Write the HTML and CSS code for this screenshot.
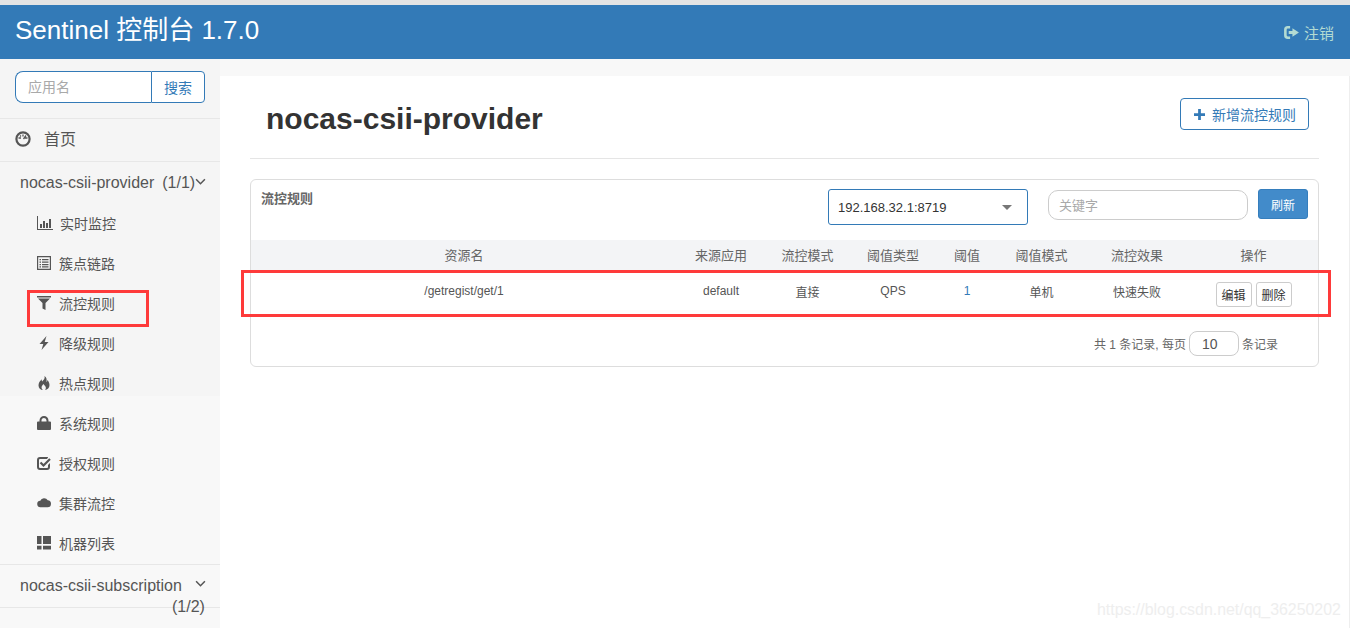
FILE: index.html
```html
<!DOCTYPE html>
<html lang="zh-CN">
<head>
<meta charset="utf-8">
<title>Sentinel 控制台</title>
<link rel="stylesheet" href="styles.css">
</head>
<body>
<div class="page">
  <header class="navbar">
    <span class="brand">Sentinel 控制台 1.7.0</span>
    <a class="logout">
      <svg class="logout-icon" viewBox="0 0 16 14"><path d="M6.500 0H4a4 4 0 0 0-4 4v6a4 4 0 0 0 4 4h2.500v-2.800H4A1.200 1.200 0 0 1 2.800 10V4A1.200 1.200 0 0 1 4 2.800h2.500V0zM9 2.500v2.800H5v3.400h4v2.800L16 7z"/></svg>注销</a>
  </header>
  <div class="body-row">
    <aside class="sidebar">
      <div class="search">
        <div class="search-group">
          <input class="search-input" placeholder="应用名">
          <button class="search-btn">搜索</button>
        </div>
      </div>
      <div class="home">
        <svg class="home-icon" viewBox="0 0 16 16"><circle cx="8" cy="8" r="6.600" fill="none" stroke="currentColor" stroke-width="2.200"/><path d="M3.500 7h2.500M10 7h2.500M8 3.500v2M5 4.500l1 1M11 4.500l-2.500 3.500" stroke="currentColor" stroke-width="1.300" fill="none"/></svg>
        <span class="home-text">首页</span>
      </div>
      <div class="app-row app-open">
        <span class="app-name">nocas-csii-provider</span><span class="app-count">(1/1)</span>
        <svg class="chev" viewBox="0 0 10 6"><path d="M1 1l4 4 4-4" fill="none" stroke="currentColor" stroke-width="1.400"/></svg>
      </div>
      <nav class="menu">
        <a class="menu-item menu-first"><svg class="mi mi-wide" viewBox="0 0 16 14"><path d="M0 0h1v13h15v1H0zM3 8h2v4H3zM6 5h2v7H6zM9 7h2v5H9zM12 3h2v9h-2z"/></svg><span>实时监控</span></a>
        <a class="menu-item"><svg class="mi" viewBox="0 0 14 14"><path fill-rule="evenodd" d="M0 0h14v14H0zM1.200 1.200v11.600h11.600V1.200zM2.500 3h1.500v1.300H2.500zM5 3h6.500v1.300H5zM2.500 5.500h1.500v1.300H2.500zM5 5.500h6.500v1.300H5zM2.500 8h1.500v1.300H2.500zM5 8h6.500v1.300H5zM2.500 10.300h1.500v1.300H2.500zM5 10.300h6.500v1.300H5z"/></svg><span>簇点链路</span></a>
        <a class="menu-item"><svg class="mi" viewBox="0 0 14 14"><path d="M0 0h14v1.500H0zM1 2.500h12L8.500 7v7l-3-1.500V7z"/></svg><span>流控规则</span></a>
        <a class="menu-item"><svg class="mi" viewBox="0 0 14 14"><path d="M9.500 0L2.500 8h3.800L4.500 14l7-8H7.700z"/></svg><span>降级规则</span></a>
        <a class="menu-item"><svg class="mi" viewBox="0 0 14 14"><path d="M7.500 0c.8 2.500-1 4-2.300 5.500C4.800 4.800 4.600 4 4.700 3.200 2.800 5 1.500 7 1.500 9.200 1.500 12 3.500 14 6 14c-1.300-1-1.800-2.300-1.200-3.700.3-.8 1-1.400 1.500-2.300.7 1 2.700 2.300 2.600 3.900-.1.900-.5 1.500-1.100 2.100 2.800-.3 4.700-2.300 4.700-5 0-2.300-1.100-3.600-1.900-5-.2 1-.6 1.600-1.300 2.100C10 4 9.800 1.500 7.500 0z"/></svg><span>热点规则</span></a>
        <a class="menu-item"><svg class="mi" viewBox="0 0 14 14"><path fill-rule="evenodd" d="M1 5.500h1.500V4.500a4.500 4.500 0 0 1 9 0v1H13a1 1 0 0 1 1 1V13a1 1 0 0 1-1 1H1a1 1 0 0 1-1-1V6.500a1 1 0 0 1 1-1zM4.500 5.500h5v-1a2.500 2.500 0 0 0-5 0z"/></svg><span>系统规则</span></a>
        <a class="menu-item"><svg class="mi" viewBox="0 0 14 14"><path d="M3 1h8v.500l-1 1.500H3a1 1 0 0 0-1 1v7a1 1 0 0 0 1 1h7a1 1 0 0 0 1-1V9l2-2v4a3 3 0 0 1-3 3H3a3 3 0 0 1-3-3V4a3 3 0 0 1 3-3z"/><path d="M3.500 6.500l3 3L13 3" fill="none" stroke="currentColor" stroke-width="2.200"/></svg><span>授权规则</span></a>
        <a class="menu-item"><svg class="mi" viewBox="0 0 15 14"><path d="M4 11.500a3.500 3.500 0 0 1-.5-7A4.500 4.500 0 0 1 11.500 4a3.800 3.800 0 0 1 3.500 3.700 3.800 3.800 0 0 1-3.800 3.800z"/></svg><span>集群流控</span></a>
        <a class="menu-item"><svg class="mi" viewBox="0 0 14 14"><path d="M0 0h4.500v8H0zM0 9.800h4.500V13.500H0zM6 0h8v8H6zM6 9.800h8v3.700H6z"/></svg><span>机器列表</span></a>
      </nav>
      <div class="app-row app-closed">
        <span class="app-name">nocas-csii-subscription</span>
        <svg class="chev chev-far" viewBox="0 0 10 6"><path d="M1 1l4 4 4-4" fill="none" stroke="currentColor" stroke-width="1.400"/></svg>
        <span class="app-count-wrap">(1/2)</span>
      </div>
    </aside>
    <main class="content">
      <div class="page-head">
        <h1 class="title">nocas-csii-provider</h1>
        <button class="add-btn"><svg class="plus" viewBox="0 0 12 12"><path d="M4.500 0h3v4.500H12v3H7.500V12h-3V7.500H0v-3h4.500z"/></svg>新增流控规则</button>
      </div>
      <section class="panel">
        <div class="panel-head">
          <span class="panel-title">流控规则</span>
          <div class="select"><span>192.168.32.1:8719</span><i class="caret"></i></div>
          <input class="keyword" placeholder="关键字">
          <button class="refresh">刷新</button>
        </div>
        <table class="rules">
          <colgroup>
            <col class="c1"><col class="c2"><col class="c3"><col class="c4"><col class="c5"><col class="c6"><col class="c7"><col class="c8">
          </colgroup>
          <thead>
            <tr><th>资源名</th><th>来源应用</th><th>流控模式</th><th>阈值类型</th><th>阈值</th><th>阈值模式</th><th>流控效果</th><th>操作</th></tr>
          </thead>
          <tbody>
            <tr><td>/getregist/get/1</td><td>default</td><td>直接</td><td>QPS</td><td class="num">1</td><td>单机</td><td>快速失败</td><td class="ops"><button class="op">编辑</button><button class="op">删除</button></td></tr>
          </tbody>
        </table>
        <div class="pager">
          <span>共 1 条记录, 每页</span><span class="page-size">10</span><span>条记录</span>
        </div>
      </section>
    </main>
  </div>
  <div class="mark mark-menu"></div>
  <div class="mark mark-row"></div>
  <div class="watermark">https://blog.csdn.net/qq_36250202</div>
</div>
</body>
</html>
```
FILE: styles.css
```css
* { box-sizing: border-box; }
html, body { margin: 0; height: 100%; }
body {
  font-family: "Liberation Sans", "Noto Sans CJK SC", sans-serif;
  font-size: 12px;
  color: #555;
  background: #f8f8f8;
  overflow: hidden;
}
.page {
  position: relative;
  width: 1350px;
  height: 628px;
  padding-top: 5px;
  display: flex;
  flex-direction: column;
  overflow: hidden;
  background: linear-gradient(#e4e4e4 0, #e4e4e4 5px, #f8f8f8 5px);
}
.navbar {
  height: 54px;
  flex: none;
  background: #337ab7;
  display: flex;
  align-items: center;
  justify-content: space-between;
  padding: 0 16px 0 15px;
}
.brand { font-size: 26px; color: #fff; position: relative; top: -5px; }
.logout {
  display: flex;
  align-items: center;
  gap: 5px;
  color: #b3dbd3;
  font-size: 15px;
}
.logout-icon { width: 15px; height: 13px; fill: #b3dbd3; }
.body-row { flex: 1; display: flex; min-height: 0; }

.sidebar {
  width: 220px;
  flex: none;
  background: linear-gradient(#f5f5f5 0, #f5f5f5 337px, #f8f8f8 337px);
}
.search { height: 60px; padding: 12px 15px 0; border-bottom: 1px solid #e7e7e7; }
.search-group { display: flex; height: 32px; }
.search-input {
  width: 136px;
  height: 32px;
  border: 1px solid #337ab7;
  border-right: 0;
  border-radius: 8px 0 0 8px;
  padding: 0 12px;
  font: 14px "Liberation Sans", "Noto Sans CJK SC", sans-serif;
  background: #fff;
  outline: 0;
}
.search-input::placeholder, .keyword::placeholder { color: #a9a9a9; opacity: 1; }
.search-btn {
  width: 54px;
  height: 32px;
  border: 1px solid #337ab7;
  border-radius: 0 4px 4px 0;
  background: #fff;
  color: #337ab7;
  font: 14px "Liberation Sans", "Noto Sans CJK SC", sans-serif;
  padding: 0;
}
.home {
  height: 43px;
  border-bottom: 1px solid #e7e7e7;
  display: flex;
  align-items: center;
  gap: 13px;
  padding-left: 15px;
  font-size: 16px;
  color: #555;
}
.home-icon { width: 16px; height: 16px; color: #555; margin-top: -2px; }
.home-text { position: relative; top: -2px; }
.app-row {
  position: relative;
  display: flex;
  font-size: 16px;
  color: #555;
  padding-left: 20px;
}
.app-open { height: 42px; padding-top: 12px; }
.app-count { margin-left: 8px; }
.chev { width: 11px; height: 7px; color: #555; margin-top: 4px; }
.app-closed {
  height: 44px;
  padding-top: 12px;
  border-top: 1px solid #e7e7e7;
  border-bottom: 1px solid #e7e7e7;
}
.chev-far { position: absolute; left: 195px; top: 15px; margin: 0; }
.app-count-wrap { position: absolute; left: 172px; top: 33px; }
.menu { display: flex; flex-direction: column; }
.menu-item {
  height: 40px;
  display: flex;
  align-items: center;
  gap: 8px;
  padding-left: 37px;
  font-size: 14px;
  color: #555;
}
.menu-first { gap: 7px; }
.mi { width: 14px; height: 14px; fill: #555; color: #555; flex: none; margin-top: -3px; }
.mi-wide { width: 16px; }
.menu-item span { position: relative; top: -1px; }

.content {
  flex: 1;
  margin-top: 17px;
  background: #fff;
  padding: 0 30px;
  border-right: 1px solid #eee;
}
.page-head {
  height: 83px;
  border-bottom: 1px solid #e5e5e5;
  display: flex;
  align-items: flex-start;
  justify-content: space-between;
  padding: 22px 10px 0 16px;
}
.title {
  margin: 0;
  font-size: 30px;
  line-height: 42px;
  font-weight: 700;
  color: #333;
}
.add-btn {
  width: 129px;
  height: 32px;
  border: 1px solid #337ab7;
  border-radius: 4px;
  background: #fff;
  color: #337ab7;
  font: 14px "Liberation Sans", "Noto Sans CJK SC", sans-serif;
  display: flex;
  align-items: center;
  gap: 7px;
  padding: 0 0 0 13px;
}
.plus { width: 11px; height: 11px; fill: #337ab7; }
.panel {
  width: 1069px;
  height: 188px;
  margin-top: 20px;
  border: 1px solid #ddd;
  border-radius: 6px;
  background: #fff;
}
.panel-head {
  height: 60px;
  display: flex;
  align-items: flex-start;
  padding: 9px 10px 0 10px;
}
.panel-title { font-size: 13px; font-weight: 700; color: #666; line-height: 20px; width: 567px; }
.select {
  width: 200px;
  height: 36px;
  border: 1px solid #337ab7;
  border-radius: 3px;
  display: flex;
  align-items: center;
  justify-content: space-between;
  padding: 0 15px 0 9px;
  font-size: 13px;
  color: #333;
}
.caret {
  width: 0;
  height: 0;
  border-left: 5px solid transparent;
  border-right: 5px solid transparent;
  border-top: 5px solid #777;
}
.keyword {
  width: 200px;
  height: 30px;
  margin: 1px 0 0 20px;
  border: 1px solid #ccc;
  border-radius: 10px;
  padding: 0 10px;
  font: 13px "Liberation Sans", "Noto Sans CJK SC", sans-serif;
  outline: 0;
}
.refresh {
  width: 50px;
  height: 30px;
  margin-left: 10px;
  border: 1px solid #357ebd;
  border-radius: 3px;
  background: #428bca;
  color: #fff;
  font: 12px "Liberation Sans", "Noto Sans CJK SC", sans-serif;
  padding: 0;
}
.rules { width: 1067px; table-layout: fixed; border-collapse: collapse; }
.c1 { width: 426px; } .c2 { width: 88px; } .c3 { width: 85px; } .c4 { width: 86px; }
.c5 { width: 62px; } .c6 { width: 87px; } .c7 { width: 104px; } .c8 { width: 129px; }
.rules th {
  height: 32px;
  background: #f3f4f6;
  font-weight: 400;
  font-size: 13px;
  color: #666;
  border-bottom: 1px solid #e0e0e0;
  padding: 0 0 3px;
  text-align: center;
}
.rules td {
  height: 42px;
  font-size: 12px;
  color: #555;
  text-align: center;
  padding: 0 0 4px;
}
.rules td.num { color: #337ab7; }
.rules td.ops { padding: 3px 0 0; }
.ops { white-space: nowrap; }
.op {
  width: 36px;
  height: 25px;
  margin: 0 2px;
  border: 1px solid #ccc;
  border-radius: 3px;
  background: #fff;
  color: #333;
  font: 12px "Liberation Sans", "Noto Sans CJK SC", sans-serif;
  padding: 0;
}
.pager {
  display: flex;
  justify-content: flex-end;
  align-items: center;
  gap: 3px;
  padding: 17px 40px 0 0;
  font-size: 12px;
  color: #666;
}
.page-size {
  width: 50px;
  height: 25px;
  border: 1px solid #ccc;
  border-radius: 8px;
  padding-left: 12px;
  font-size: 14px;
  line-height: 25px;
  color: #555;
}
.mark { position: absolute; border: 3px solid #fe3a3a; pointer-events: none; }
.mark-menu { left: 27px; top: 290px; width: 122px; height: 37px; }
.mark-row { left: 241px; top: 270px; width: 1090px; height: 47px; }
.watermark {
  position: absolute;
  left: 1097px;
  top: 601px;
  font-size: 15.9px;
  color: #eee;
}
```
